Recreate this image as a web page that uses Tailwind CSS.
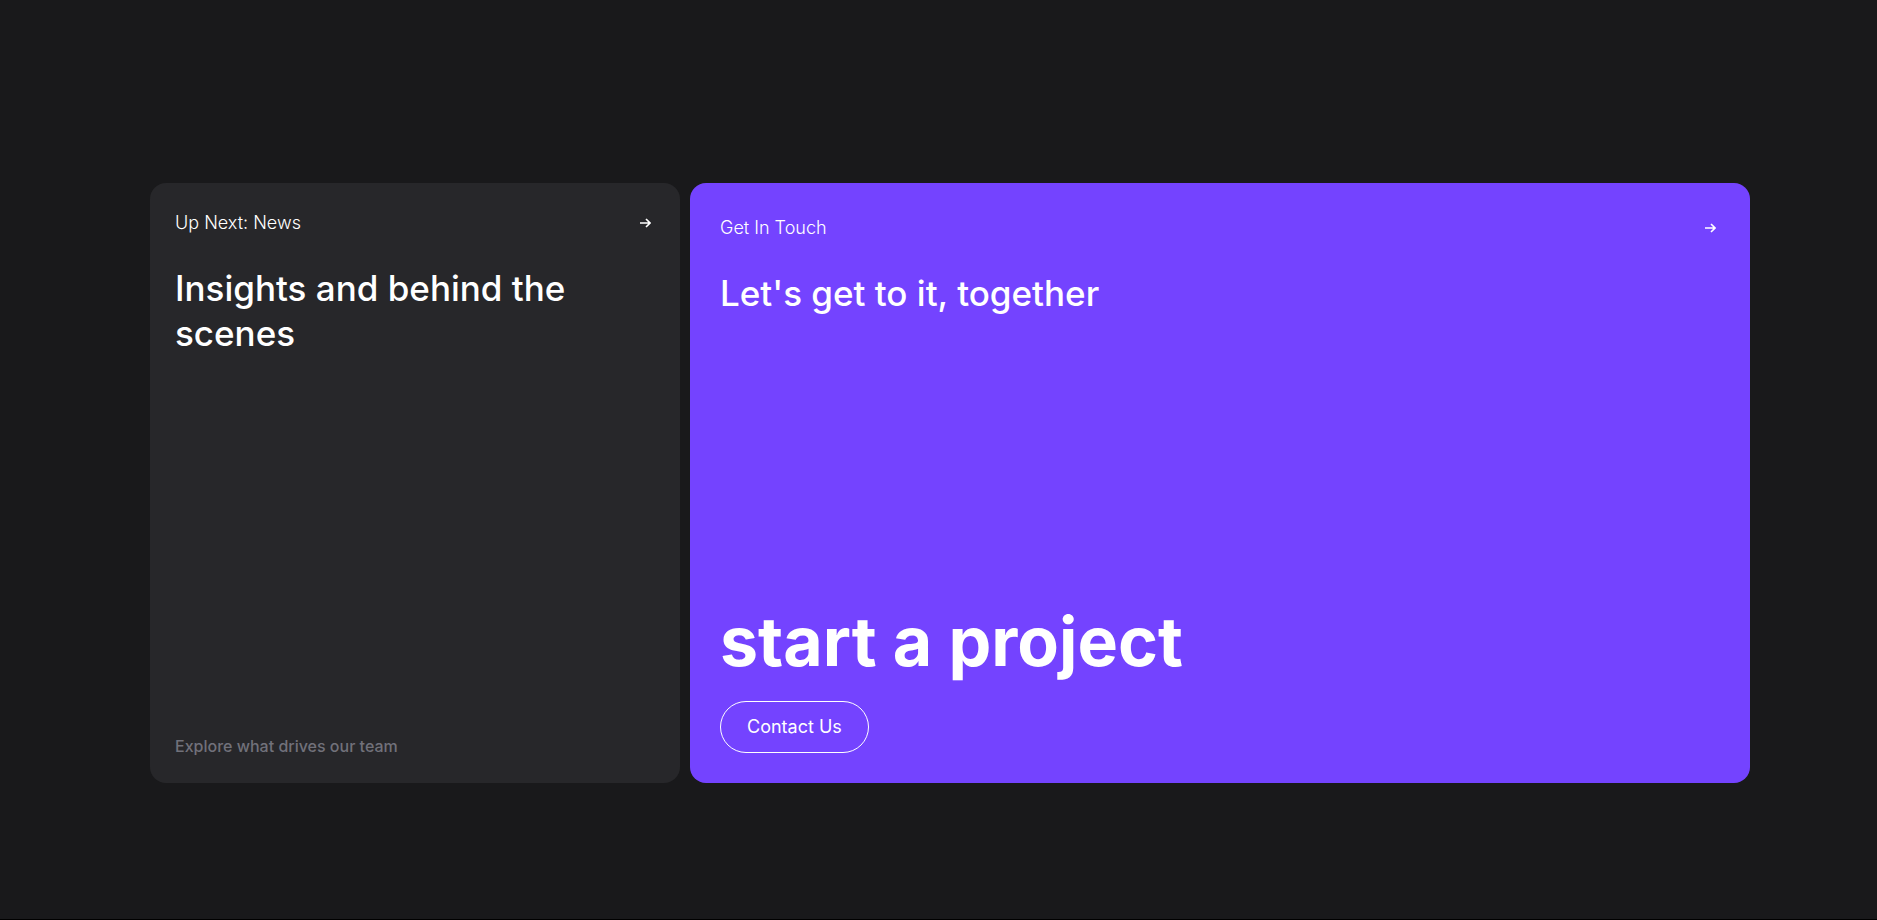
<!DOCTYPE html>
<html lang="en">
<head>
<meta charset="utf-8">
<meta name="viewport" content="width=device-width, initial-scale=1">
<title>Start a project</title>
<script src="https://cdn.jsdelivr.net/npm/@tailwindcss/browser@4"></script>
</head>
<body class="bg-[#19191b] text-white font-['Inter',sans-serif]">
<main class="min-h-screen flex items-center border-b border-black pt-[47px] pl-[150px] pr-[127px]">
  <div class="w-full grid grid-cols-1 lg:grid-cols-[1fr_2fr] gap-[10px]">
    <article class="min-h-[600px] rounded-2xl bg-[#27272a] p-[25px] flex flex-col">
      <header class="flex items-center justify-between pr-1 h-[30px]">
        <p class="text-[18px] leading-[30px] font-light">Up Next: News</p>
        <a href="#news" aria-label="News">
          <svg class="w-[11px] h-[10px]" viewBox="0 0 11 10" fill="none" stroke="currentColor" stroke-width="1.6"><path d="M0 5h9.5M6 1l4 4-4 4"/></svg>
        </a>
      </header>
      <h2 class="mt-7 text-[35px] leading-[45px] font-medium">Insights and behind the scenes</h2>
      <p class="mt-auto text-[16px] leading-6 font-medium text-[#71717a]">Explore what drives our team</p>
    </article>
    <article class="min-h-[600px] rounded-2xl bg-[#7443ff] p-[30px] flex flex-col items-start">
      <header class="w-full flex items-center justify-between pr-1 h-[30px]">
        <p class="text-[18px] leading-[30px] font-light">Get In Touch</p>
        <a href="#contact" aria-label="Get in touch">
          <svg class="w-[11px] h-[10px]" viewBox="0 0 11 10" fill="none" stroke="currentColor" stroke-width="1.6"><path d="M0 5h9.5M6 1l4 4-4 4"/></svg>
        </a>
      </header>
      <h2 class="mt-7 text-[35px] leading-[45px] font-medium">Let's get to it, together</h2>
      <p class="mt-auto text-[68px] leading-[80px] font-bold">start a project</p>
      <button type="button" class="mt-5 h-[52px] px-[26px] rounded-full border border-white text-[18px] leading-[30px]">Contact Us</button>
    </article>
  </div>
</main>
</body>
</html>
